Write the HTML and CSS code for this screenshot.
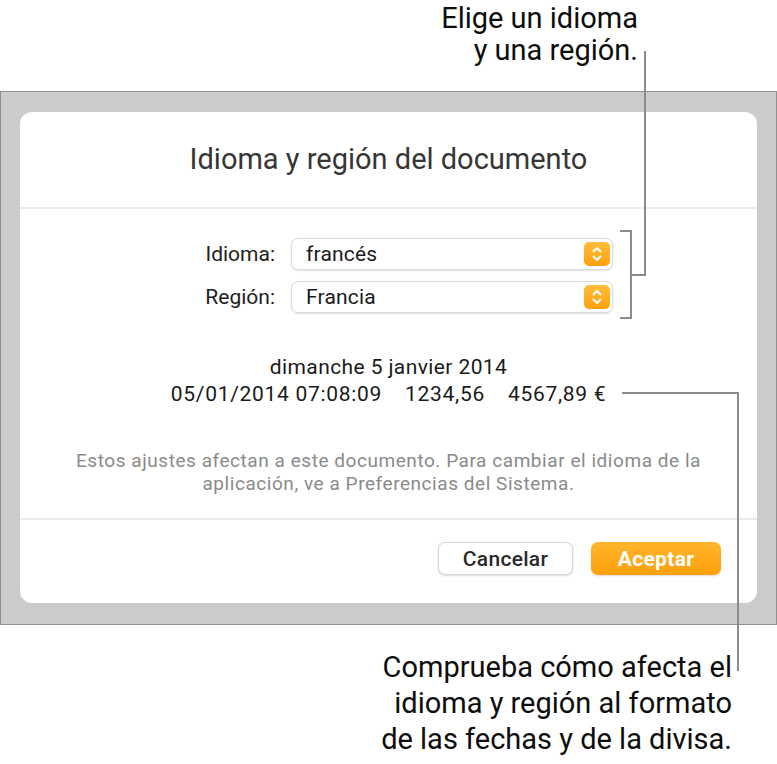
FILE: index.html
```html
<!DOCTYPE html>
<html lang="es">
  <head>
    <meta charset="UTF-8" />
    <meta name="viewport" content="width=device-width, initial-scale=1.0" />
    <title>Idioma y región del documento</title>
    <link rel="stylesheet" href="styles.css">
  </head>
  <body>
    <div class="page">
      <!-- Callout above the dialog -->
      <div class="callout callout-top">Elige un idioma<br>y una región.</div>

      <div class="backdrop">
        <div class="dialog">
          <div class="dialog-header">
            <h1 class="dialog-title">Idioma y región del documento</h1>
          </div>
          <div class="divider"></div>

          <div class="form">
            <label class="form-label">Idioma:</label>
            <div class="popup">
              <span class="popup-value">francés</span>
              <span class="stepper">
                <svg width="26" height="24" viewBox="0 0 26 24"><path d="M9.5 9.5 L13 6 L16.5 9.5 M9.5 14.5 L13 18 L16.5 14.5" /></svg>
              </span>
            </div>
            <label class="form-label">Región:</label>
            <div class="popup">
              <span class="popup-value">Francia</span>
              <span class="stepper">
                <svg width="26" height="24" viewBox="0 0 26 24"><path d="M9.5 9.5 L13 6 L16.5 9.5 M9.5 14.5 L13 18 L16.5 14.5" /></svg>
              </span>
            </div>
          </div>

          <div class="preview">
            <div class="preview-line">dimanche 5 janvier 2014</div>
            <div class="preview-line preview-values">
              <span>05/01/2014 07:08:09</span>
              <span>1234,56</span>
              <span>4567,89 €</span>
            </div>
          </div>

          <p class="note">Estos ajustes afectan a este documento. Para cambiar el idioma de la<br>aplicación, ve a Preferencias del Sistema.</p>

          <div class="divider"></div>
          <div class="dialog-footer">
            <button class="btn">Cancelar</button>
            <button class="btn btn-primary">Aceptar</button>
          </div>
        </div>
      </div>

      <!-- Callout below the dialog -->
      <div class="callout callout-bottom">Comprueba cómo afecta el<br>idioma y región al formato<br>de las fechas y de la divisa.</div>

      <!-- Leader lines drawn over everything -->
      <svg class="leaders" width="777" height="764" viewBox="0 0 777 764">
        <path d="M620 231 H631 V318 H620" />
        <path d="M631 275 H645 V51" />
        <path d="M622 393 H738 V671" />
      </svg>
    </div>
  </body>
</html>
```

FILE: styles.css
```css
/* Basic reset */
body,
html {
  margin: 0;
  padding: 0;
  background-color: #ffffff;
  font-family: Roboto, "Liberation Sans", sans-serif;
}

.page {
  position: relative;
  width: 777px;
  height: 764px;
  overflow: hidden;
}

/* Callout texts */
.callout {
  font-size: 29px;
  color: #0d0d0d;
  text-align: right;
}

.callout-top {
  height: 91px;
  box-sizing: border-box;
  padding: 2px 139px 0 0;
  line-height: 32px;
}

.callout-bottom {
  padding: 24px 45px 0 0;
  line-height: 36px;
}

/* Gray window area */
.backdrop {
  background-color: #cbcbcb;
  border: 1px solid #8f8f8f;
  padding: 20px 19px 21px 19px;
}

.dialog {
  background-color: #ffffff;
  border-radius: 12px;
  height: 491px;
  display: flex;
  flex-direction: column;
}

.dialog-header {
  height: 95px;
  display: flex;
  align-items: center;
  justify-content: center;
  padding-bottom: 2px;
  box-sizing: border-box;
}

.dialog-title {
  margin: 0;
  font-size: 29px;
  font-weight: 400;
  color: #363636;
}

.divider {
  height: 2px;
  background-color: #ebebeb;
}

/* Language / region rows */
.form {
  display: grid;
  grid-template-columns: 255px 322px;
  column-gap: 16px;
  row-gap: 11px;
  padding-top: 29px;
  align-items: center;
}

.form-label {
  text-align: right;
  font-size: 21px;
  color: #1e1e1e;
}

.popup {
  height: 32px;
  box-sizing: border-box;
  border: 1px solid #dadada;
  border-radius: 7px;
  box-shadow: 0 1px 2px rgba(0, 0, 0, 0.12);
  display: flex;
  align-items: center;
  justify-content: space-between;
  padding: 0 2px 0 14px;
}

.popup-value {
  font-size: 21px;
  letter-spacing: 0.2px;
  color: #1a1a1a;
}

.stepper {
  width: 26px;
  height: 24px;
  border-radius: 5px;
  background: linear-gradient(#ffbd3c, #ffa00c);
  display: flex;
}

.stepper path {
  fill: none;
  stroke: #ffffff;
  stroke-width: 2;
  stroke-linecap: round;
  stroke-linejoin: round;
}

/* Date and number preview */
.preview {
  margin-top: 41px;
  text-align: center;
  font-size: 21px;
  line-height: 27px;
  letter-spacing: 0.4px;
  color: #1a1a1a;
}

.preview-values {
  display: flex;
  justify-content: center;
  gap: 23px;
  letter-spacing: 0.7px;
}

.note {
  margin: 41px 0 23px 0;
  text-align: center;
  font-size: 19px;
  line-height: 23px;
  letter-spacing: 0.55px;
  color: #8a8a8a;
}

/* Buttons */
.dialog-footer {
  display: flex;
  justify-content: flex-end;
  gap: 18px;
  padding: 22px 36px 0 0;
}

.btn {
  height: 33px;
  width: 135px;
  border-radius: 7px;
  border: 1px solid #d4d4d4;
  background-color: #ffffff;
  box-shadow: 0 1px 2px rgba(0, 0, 0, 0.15);
  font-family: Roboto, "Liberation Sans", sans-serif;
  font-size: 21px;
  font-weight: 500;
  letter-spacing: 0.3px;
  color: #2a2a2a;
  padding: 0;
}

.btn-primary {
  width: 130px;
  border: none;
  background: linear-gradient(#ffb52c, #ff9f0a);
  color: #ffffff;
  font-weight: 700;
}

/* Leader lines */
.leaders {
  position: absolute;
  left: 0;
  top: 0;
  pointer-events: none;
}

.leaders path {
  fill: none;
  stroke: #8c8c8c;
  stroke-width: 2;
}
```
